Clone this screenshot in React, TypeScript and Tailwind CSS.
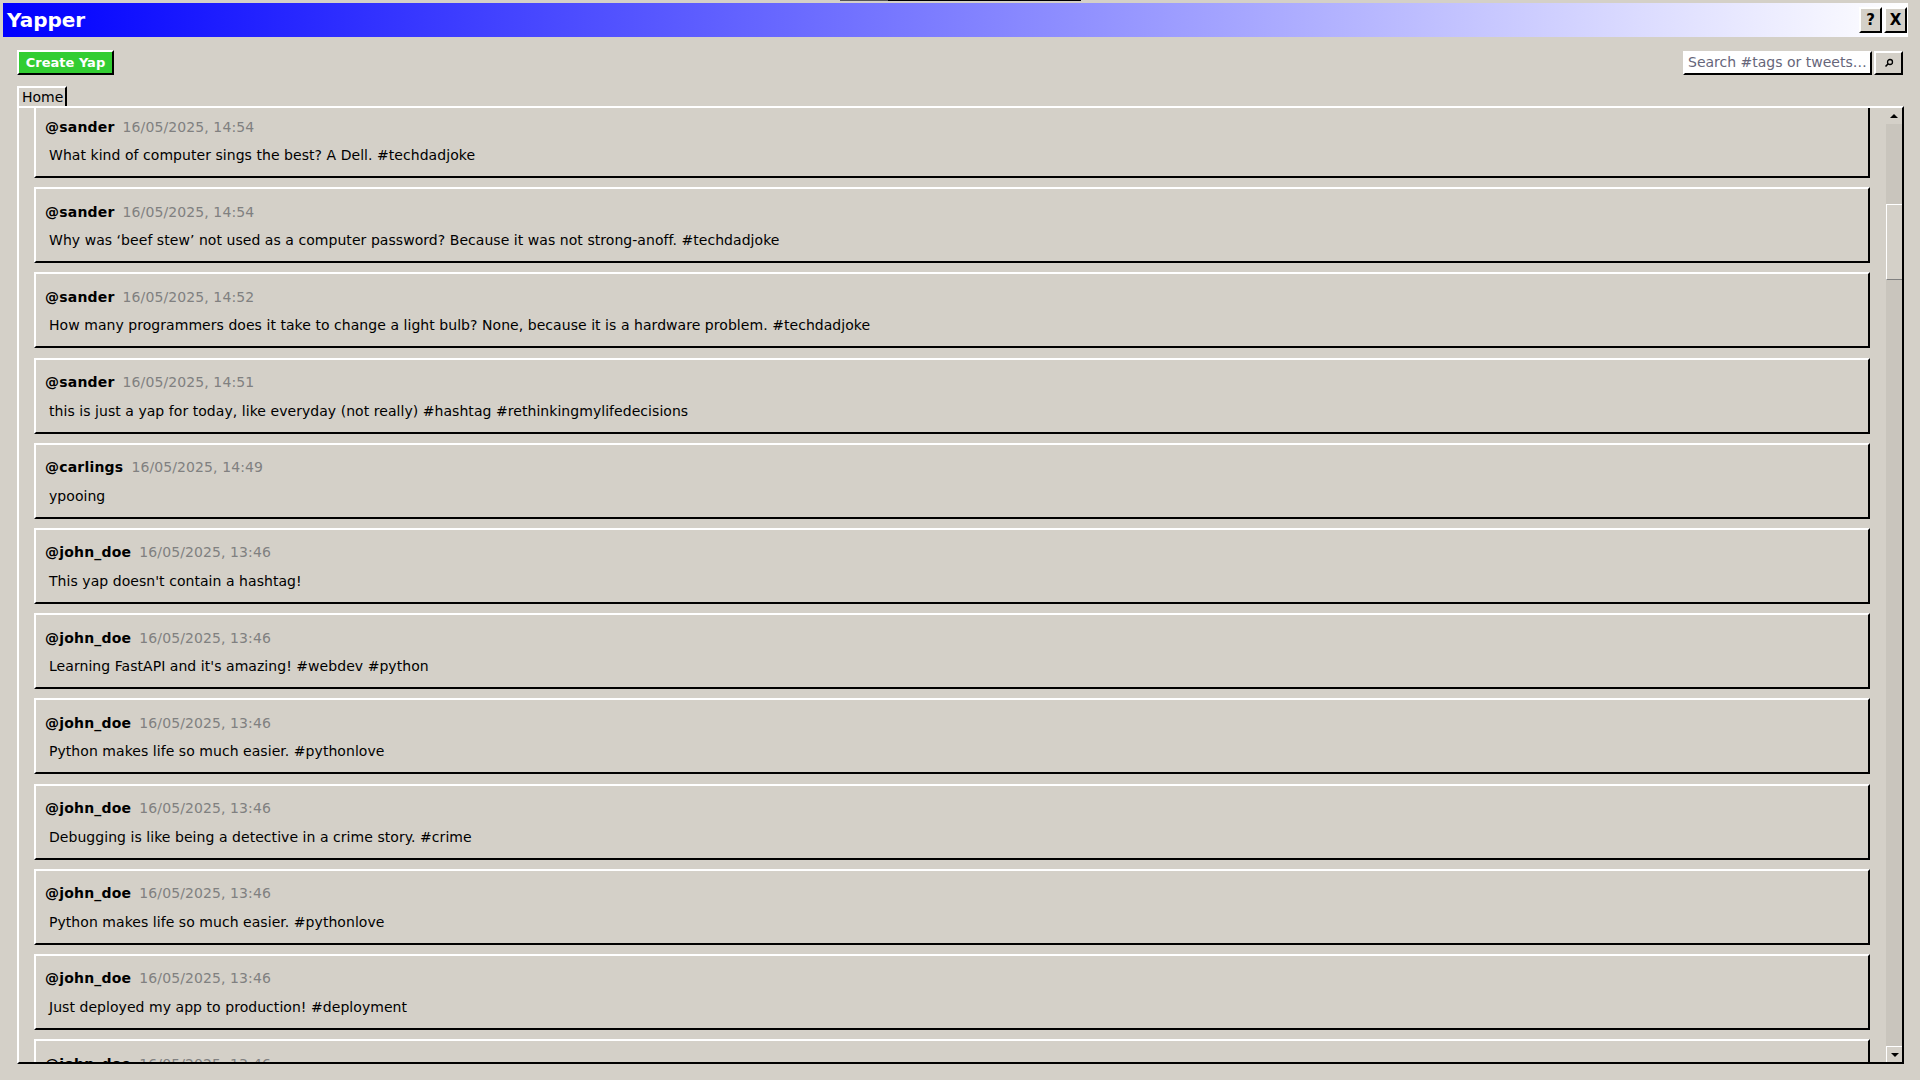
import React from "react";

type Yap = { user: string; time: string; text: string };

const yaps: Yap[] = [
  { user: "@sander", time: "16/05/2025, 14:54", text: "What kind of computer sings the best? A Dell. #techdadjoke" },
  { user: "@sander", time: "16/05/2025, 14:54", text: "Why was ‘beef stew’ not used as a computer password? Because it was not strong-anoff. #techdadjoke" },
  { user: "@sander", time: "16/05/2025, 14:52", text: "How many programmers does it take to change a light bulb? None, because it is a hardware problem. #techdadjoke" },
  { user: "@sander", time: "16/05/2025, 14:51", text: "this is just a yap for today, like everyday (not really) #hashtag #rethinkingmylifedecisions" },
  { user: "@carlings", time: "16/05/2025, 14:49", text: "ypooing" },
  { user: "@john_doe", time: "16/05/2025, 13:46", text: "This yap doesn't contain a hashtag!" },
  { user: "@john_doe", time: "16/05/2025, 13:46", text: "Learning FastAPI and it's amazing! #webdev #python" },
  { user: "@john_doe", time: "16/05/2025, 13:46", text: "Python makes life so much easier. #pythonlove" },
  { user: "@john_doe", time: "16/05/2025, 13:46", text: "Debugging is like being a detective in a crime story. #crime" },
  { user: "@john_doe", time: "16/05/2025, 13:46", text: "Python makes life so much easier. #pythonlove" },
  { user: "@john_doe", time: "16/05/2025, 13:46", text: "Just deployed my app to production! #deployment" },
  { user: "@john_doe", time: "16/05/2025, 13:46", text: "Hello world, this is my first yap! #hello" },
];

function YapCard({ yap }: { yap: Yap }) {
  return (
    <div className="h-[76px] w-[1836px] shrink-0 border-2 border-t-white border-l-white border-b-black border-r-black pl-[9px] pt-[13px]">
      <div className="flex h-[20px] items-center whitespace-nowrap">
        <span className="text-[14px] font-bold tracking-[0.2px] text-black">{yap.user}</span>
        <span className="ml-[8px] text-[14px] tracking-[0.1px] text-[#808080]">{yap.time}</span>
      </div>
      <p className="mt-[8px] h-[20px] pl-[4px] text-[14px] leading-[20px] tracking-[0.05px] whitespace-nowrap text-black">{yap.text}</p>
    </div>
  );
}

function Scrollbar() {
  return (
    <div className="flex h-full w-[16px] shrink-0 flex-col bg-[#c9c5bd]">
      <div className="flex h-[16px] w-[16px] items-center justify-center bg-[#d4d0c8]">
        <div className="h-0 w-0 border-x-[4px] border-b-[4px] border-x-transparent border-b-black" />
      </div>
      <div className="h-[80px]" />
      <div className="h-[76px] w-[16px] border-t border-l border-t-white border-l-white border-b border-b-[#808080] bg-[#d4d0c8]" />
      <div className="flex-1" />
      <div className="flex h-[16px] w-[16px] items-center justify-center border-t border-l border-white bg-[#d4d0c8]">
        <div className="h-0 w-0 border-x-[4px] border-t-[4px] border-x-transparent border-t-black" />
      </div>
    </div>
  );
}

export default function App() {
  return (
    <div className="h-[1080px] w-[1920px] overflow-hidden bg-[#d4d0c8] font-[Tahoma,'DejaVu_Sans',sans-serif]">
      {/* stray screen edge */}
      <div className="flex h-[3px] items-start pl-[840px]">
        <div className="h-[1px] w-[48px] bg-[#555555]" />
        <div className="h-[1px] w-[193px] bg-black" />
      </div>

      {/* title bar */}
      <div className="ml-[3px] flex h-[34px] w-[1905px] items-center justify-between bg-linear-to-r/srgb from-[#0000ff] to-[#ffffff] pr-[1px] pl-[4px]">
        <span className="text-[20px] leading-none font-bold text-white">Yapper</span>
        <div className="flex gap-[2px]">
          <button className="flex h-[26px] w-[23px] items-center justify-center border-2 border-t-white border-l-white border-b-black border-r-black bg-[#d4d0c8] text-[15px] font-bold text-black">?</button>
          <button className="flex h-[26px] w-[23px] items-center justify-center border-2 border-t-white border-l-white border-b-black border-r-black bg-[#d4d0c8] text-[15px] font-bold text-black">X</button>
        </div>
      </div>

      {/* toolbar */}
      <div className="mt-[13px] flex h-[25px] items-center justify-between pr-[17px] pl-[17px]">
        <button className="flex h-[25px] w-[97px] items-center justify-center border-2 border-t-white border-l-white border-b-black border-r-black bg-[#32cd32] text-[13px] font-bold text-white">
          Create Yap
        </button>
        <div className="flex items-center gap-[2px]">
          <div className="flex h-[24px] w-[189px] items-center border-2 border-t-white border-l-white border-b-black border-r-black bg-white pl-[3px] text-[14px] whitespace-nowrap text-[#66667a]">
            Search #tags or tweets…
          </div>
          <button className="flex h-[24px] w-[29px] items-center justify-center border-2 border-t-white border-l-white border-b-black border-r-black bg-[#d4d0c8]">
            <svg width="10" height="10" viewBox="0 0 10 10">
              <circle cx="6" cy="4" r="2.5" fill="none" stroke="black" strokeWidth="1.3" />
              <line x1="4.2" y1="5.8" x2="1.5" y2="8.5" stroke="black" strokeWidth="1.6" />
            </svg>
          </button>
        </div>
      </div>

      {/* tab */}
      <div className="mt-[11px] ml-[17px] flex h-[20px] w-[50px] items-center border-t-2 border-l-2 border-r-2 border-t-white border-l-white border-r-black pl-[3px] text-[14px] text-black">
        Home
      </div>

      {/* notebook frame */}
      <div className="ml-[17px] flex h-[958px] w-[1887px] border-2 border-t-white border-l-white border-b-black border-r-black">
        <div className="h-full flex-1 overflow-hidden">
          <div className="-mt-[6px] ml-[15px] flex flex-col gap-[9.2px]">
            {yaps.map((y, i) => (
              <YapCard key={i} yap={y} />
            ))}
          </div>
        </div>
        <Scrollbar />
      </div>
    </div>
  );
}
